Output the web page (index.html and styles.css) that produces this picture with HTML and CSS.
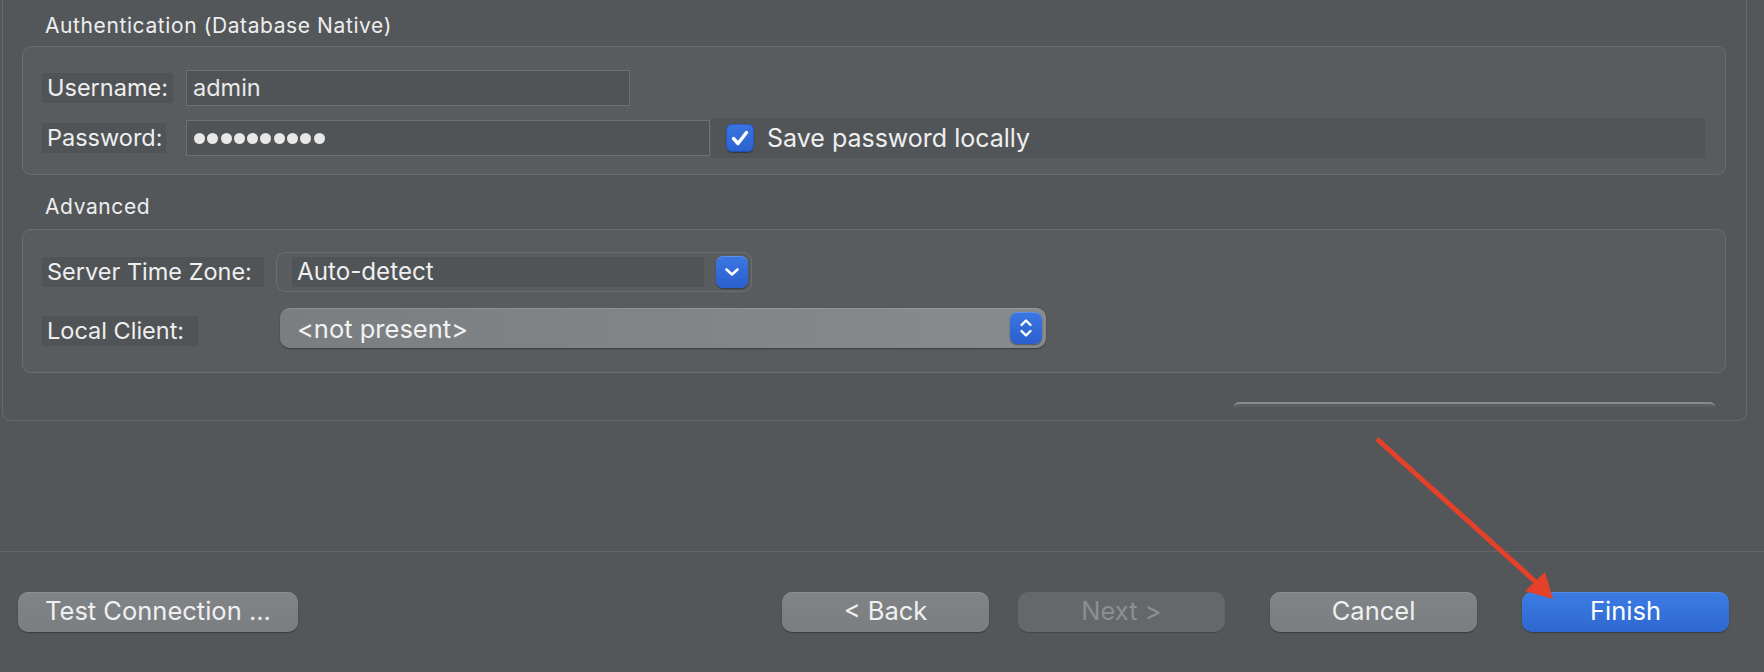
FILE: index.html
```html
<!DOCTYPE html>
<html lang="en">
<head>
<meta charset="utf-8">
<title>Connection settings</title>
<link rel="stylesheet" href="styles.css">
</head>
<body>
<div class="page">
  <div class="panel">
    <div class="section-title">Authentication (Database Native)</div>
    <div class="group group-auth">
      <div class="row row-user">
        <div class="label-cell"><span class="label label-user">Username:</span></div>
        <div class="field field-user">admin</div>
      </div>
      <div class="row row-pass">
        <div class="label-cell"><span class="label label-pass">Password:</span></div>
        <div class="field field-pass" aria-label="password">
          <span class="dot"></span><span class="dot"></span><span class="dot"></span><span class="dot"></span><span class="dot"></span><span class="dot"></span><span class="dot"></span><span class="dot"></span><span class="dot"></span><span class="dot"></span>
        </div>
        <div class="save-strip">
          <span class="checkbox">
            <svg width="28" height="28" viewBox="0 0 28 28"><path d="M7.5 14.5 L12 19.5 L20.5 8.5" fill="none" stroke="#ffffff" stroke-width="3.4" stroke-linecap="round" stroke-linejoin="round"/></svg>
          </span>
          <span class="save-label">Save password locally</span>
        </div>
      </div>
    </div>
    <div class="section-title section-adv">Advanced</div>
    <div class="group group-adv">
      <div class="row row-tz">
        <div class="label-cell label-cell-wide"><span class="label label-tz">Server Time Zone:</span></div>
        <div class="combo">
          <div class="combo-field">Auto-detect</div>
          <span class="blue-btn">
            <svg width="32" height="32" viewBox="0 0 32 32"><path d="M10.5 13.5 L16 18.5 L21.5 13.5" fill="none" stroke="#ffffff" stroke-width="2.6" stroke-linecap="round" stroke-linejoin="round"/></svg>
          </span>
        </div>
      </div>
      <div class="row row-client">
        <div class="label-cell label-cell-wide"><span class="label label-client">Local Client:</span></div>
        <div class="popup">
          <span class="popup-text">&lt;not present&gt;</span>
          <span class="blue-btn">
            <svg width="32" height="32" viewBox="0 0 32 32"><path d="M11.5 13 L16 8.5 L20.5 13" fill="none" stroke="#ffffff" stroke-width="2.4" stroke-linecap="round" stroke-linejoin="round"/><path d="M11.5 19 L16 23.5 L20.5 19" fill="none" stroke="#ffffff" stroke-width="2.4" stroke-linecap="round" stroke-linejoin="round"/></svg>
          </span>
        </div>
      </div>
    </div>
    <div class="bar-row"><div class="clipped-bar"></div></div>
  </div>

  <div class="footer">
    <button class="btn btn-test">Test Connection ...</button>
    <div class="spacer"></div>
    <button class="btn btn-back">&lt; Back</button>
    <button class="btn btn-next" disabled>Next &gt;</button>
    <button class="btn btn-cancel">Cancel</button>
    <button class="btn btn-finish">Finish</button>
  </div>

  <svg class="annotation" width="1764" height="672" viewBox="0 0 1764 672">
    <line x1="1377" y1="439" x2="1538" y2="584" stroke="#e5402a" stroke-width="5" stroke-linecap="butt"/>
    <polygon points="1553,599 1525,591 1545,572" fill="#e5402a"/>
  </svg>
</div>
</body>
</html>
```

FILE: styles.css
```css
* {
  box-sizing: border-box;
}

html, body {
  margin: 0;
  padding: 0;
  width: 1764px;
  height: 672px;
  overflow: hidden;
  background: #53575a;
}

body {
  font-family: Inter, "Liberation Sans", sans-serif;
  color: #ededed;
}

.page {
  position: relative;
  width: 1764px;
  height: 672px;
  overflow: hidden;
  display: flex;
  flex-direction: column;
}

/* ---------- main panel ---------- */
.panel {
  margin-left: 2px;
  width: 1745px;
  height: 421px;
  flex: none;
  border: 1px solid #676b6e;
  border-top: none;
  border-radius: 0 0 9px 9px;
  padding: 0 20px 0 19px;
  background: #53575a;
  overflow: hidden;
}

.section-title {
  margin: 13px 0 7px 0;
  padding-left: 23px;
  height: 26px;
  line-height: 26px;
  font-size: 21px;
  letter-spacing: 0.6px;
  color: #eeeeee;
  white-space: nowrap;
}

.section-adv {
  margin: 19px 0 9px 0;
}

.group {
  border: 1px solid #6a6e71;
  border-radius: 9px;
  background: #585c5f;
}

.group-auth {
  padding: 23px 20px 16px 19px;
  display: flex;
  flex-direction: column;
  gap: 12px;
}

.group-adv {
  padding: 22px 20px 24px 19px;
  display: flex;
  flex-direction: column;
  gap: 16px;
}

.row {
  display: flex;
  align-items: center;
}

.row-user { height: 36px; }
.row-pass { height: 40px; }
.row-tz { height: 40px; }
.row-client { height: 40px; align-items: flex-start; }

.label-cell {
  width: 144px;
  flex: none;
  display: flex;
}

.label-cell-wide {
  width: 234px;
}

.label {
  display: inline-block;
  height: 30px;
  line-height: 30px;
  padding-left: 5px;
  font-size: 23.5px;
  color: #efefef;
  background: #505457;
  white-space: nowrap;
}

.label-user { width: 131px; }
.label-pass { width: 124px; }
.label-tz { width: 222px; }
.label-client { width: 156px; margin-top: 8px; }

.field {
  height: 36px;
  border: 1px solid #6c7073;
  background: #505457;
  flex: none;
}

.field-user {
  width: 444px;
  padding-left: 6px;
  font-size: 23.5px;
  line-height: 34px;
  color: #eaeaea;
}

.field-pass {
  width: 524px;
  padding-left: 7px;
  display: flex;
  align-items: center;
  gap: 2.3px;
}

.dot {
  width: 11px;
  height: 11px;
  border-radius: 50%;
  background: #e8e8e8;
  flex: none;
}

.save-strip {
  flex: 1;
  height: 40px;
  margin-left: 1px;
  padding-left: 15px;
  background: #515558;
  display: flex;
  align-items: center;
}

.checkbox {
  width: 28px;
  height: 28px;
  border-radius: 6px;
  background: linear-gradient(#3a75e2, #2c62cf);
  box-shadow: 0 1px 1px rgba(0, 0, 0, 0.35), inset 0 0 0 1px rgba(20, 50, 120, 0.35);
  display: flex;
  flex: none;
}

.save-label {
  margin-left: 13px;
  font-size: 25px;
  color: #efefef;
  white-space: nowrap;
}

/* ---------- combo box ---------- */
.combo {
  width: 476px;
  height: 40px;
  border: 1px solid #6b6f72;
  border-radius: 9px;
  background: #595d60;
  padding: 0 3px 0 15px;
  display: flex;
  align-items: center;
  gap: 12px;
}

.combo-field {
  width: 412px;
  height: 30px;
  background: #505457;
  padding-left: 5px;
  font-size: 24.2px;
  line-height: 30px;
  color: #efefef;
  white-space: nowrap;
}

.blue-btn {
  width: 32px;
  height: 32px;
  flex: none;
  border-radius: 7px;
  background: linear-gradient(#3b77e3, #2b5fcc);
  box-shadow: 0 1px 1.5px rgba(0, 0, 0, 0.4), inset 0 1px 0 rgba(255, 255, 255, 0.18);
  display: flex;
}

.popup {
  margin-left: 4px;
  width: 766px;
  height: 40px;
  border-radius: 10px;
  background: linear-gradient(90deg, #7b7e80, #888b8d);
  box-shadow: 0 1px 1.5px rgba(0, 0, 0, 0.35), inset 0 1px 0 rgba(255, 255, 255, 0.12);
  padding: 0 4px 0 17px;
  display: flex;
  align-items: center;
  justify-content: space-between;
}

.popup-text {
  font-size: 25.5px;
  color: #f2f2f2;
  white-space: nowrap;
}

/* ---------- clipped bar at panel bottom ---------- */
.bar-row {
  margin-top: 29px;
  display: flex;
  justify-content: flex-end;
  padding-right: 11px;
}

.clipped-bar {
  width: 481px;
  height: 5px;
  border-radius: 7px 7px 0 0;
  border-top: 2px solid #888b8d;
  background: #5c6063;
}

/* ---------- footer ---------- */
.footer {
  margin-top: 130px;
  border-top: 1px solid #626669;
  padding: 40px 35px 0 18px;
  display: flex;
  align-items: flex-start;
}

.spacer {
  flex: 1;
}

.btn {
  height: 40px;
  width: 207px;
  flex: none;
  border: none;
  border-radius: 10px;
  background: linear-gradient(#818486, #7b7e80);
  box-shadow: 0 1px 1.5px rgba(0, 0, 0, 0.35), inset 0 1px 0 rgba(255, 255, 255, 0.1);
  font-family: Inter, "Liberation Sans", sans-serif;
  font-size: 25.5px;
  color: #f0f0f0;
  padding: 0 0 4px 0;
  white-space: nowrap;
}

.btn-test {
  width: 280px;
}

.btn-next {
  margin-left: 29px;
  background: #65686b;
  color: #8c8f91;
  box-shadow: 0 1px 1px rgba(0, 0, 0, 0.2);
}

.btn-cancel {
  margin-left: 45px;
}

.btn-finish {
  margin-left: 45px;
  background: linear-gradient(#3c7de3, #2e68cf);
  color: #ffffff;
}

/* ---------- annotation arrow overlay ---------- */
.annotation {
  position: absolute;
  left: 0;
  top: 0;
  pointer-events: none;
}
```
